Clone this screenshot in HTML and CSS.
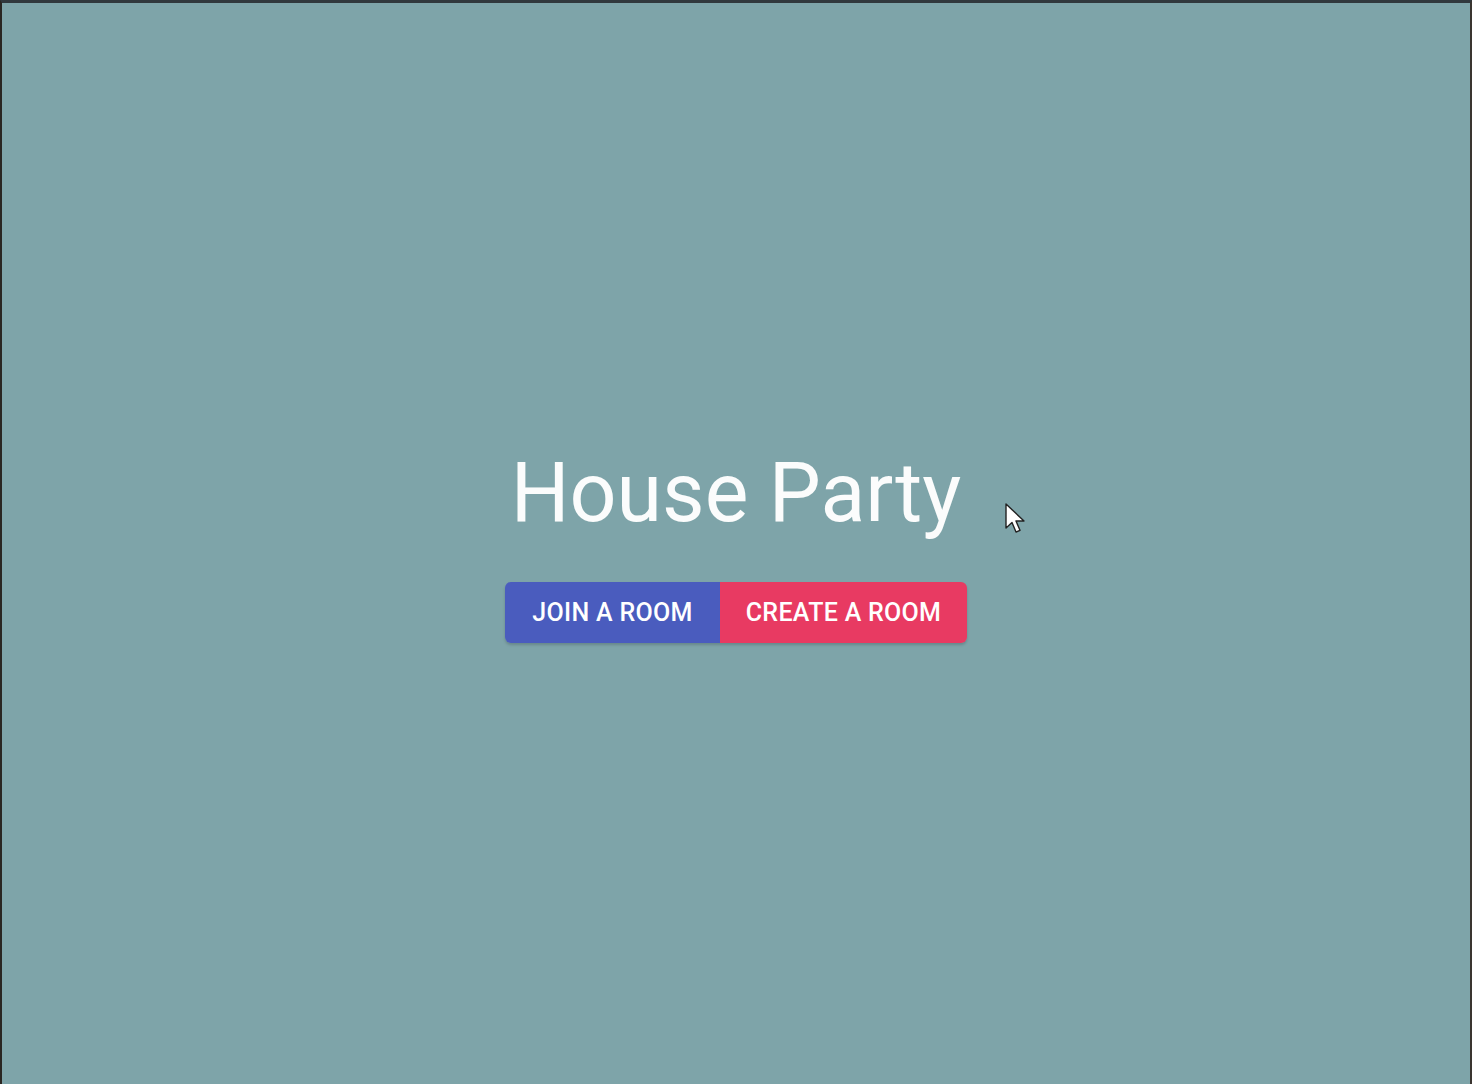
FILE: index.html
```html
<!DOCTYPE html>
<html>
<head>
<meta charset="utf-8">
<link rel="stylesheet" href="styles.css">
</head>
<body>
<div class="frame">
  <main class="home">
    <h1 class="title">House Party</h1>
    <div class="btn-group">
      <button class="btn btn-join">JOIN A ROOM</button>
      <button class="btn btn-create">CREATE A ROOM</button>
    </div>
  </main>
  <svg class="cursor" width="22" height="34" viewBox="0 0 22 34"><path d="M1 1 L1 25 L7 19.5 L11 29 L15 27.3 L11 18 L19 18 Z" fill="#fff" stroke="#222" stroke-width="1.4" stroke-linejoin="round"/></svg>
</div>
</body>
</html>
```

FILE: styles.css
```css
html, body {
  margin: 0;
  padding: 0;
  height: 100%;
}
body {
  background: #2a2f33;
  font-family: Roboto, "Noto Sans", sans-serif;
}
.frame {
  position: relative;
  box-sizing: border-box;
  height: 1084px;
  width: 1472px;
  background: #7ea4a9;
  border-top: 3px solid #31383d;
  border-left: 2px solid #2a2622;
  border-right: 2px solid #3a3530;
  display: flex;
  justify-content: center;
}
.home {
  display: flex;
  flex-direction: column;
  align-items: center;
  padding-top: 440px;
}
.title {
  margin: 0;
  font-size: 82.5px;
  font-weight: 400;
  color: #fbfcfc;
  line-height: 100px;
  letter-spacing: 0;
}
.btn-group {
  display: flex;
  margin-top: 39px;
  border-radius: 6px;
  overflow: hidden;
  box-shadow: 0 2px 3px rgba(0,0,0,0.18);
}
.btn {
  border: none;
  font-family: Roboto, sans-serif;
  font-weight: 500;
  font-size: 25px;
  letter-spacing: 0.3px;
  color: #fff;
  height: 61px;
  padding: 0 20px;
  cursor: pointer;
}
.btn-join {
  background: #4a5cbe;
  width: 215px;
}
.btn-create {
  background: #e83a62;
  width: 247px;
}
.cursor {
  position: absolute;
  left: 1003px;
  top: 500px;
}
```
